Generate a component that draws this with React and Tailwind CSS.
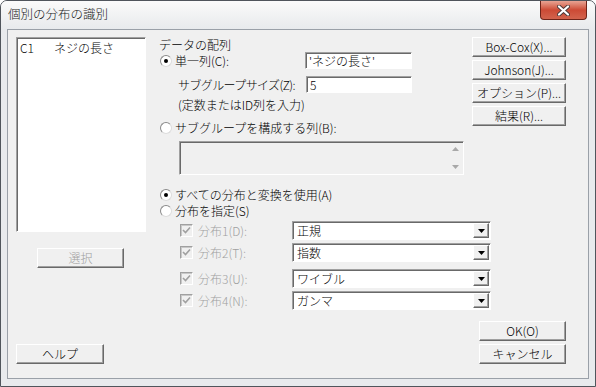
import React from 'react';

function Btn({ children, className = '', disabled }) {
  return (
    <div
      className={`h-[20px] flex items-center justify-center bg-[#f0f0f0] border border-t-white border-l-white border-r-[#696969] border-b-[#696969] shadow-[inset_-1px_-1px_0_#a0a0a0] text-[12px] leading-none ${disabled ? 'text-[#a0a0a0]' : 'text-black'} ${className}`}
    >
      {children}
    </div>
  );
}

function Radio({ checked }) {
  return (
    <span className="w-[12px] h-[12px] shrink-0 rounded-full bg-white border border-t-[#8a8a8a] border-l-[#8a8a8a] border-r-[#dcdcdc] border-b-[#dcdcdc] flex items-center justify-center">
      {checked && <span className="w-[4px] h-[4px] rounded-full bg-black" />}
    </span>
  );
}

function Check() {
  return (
    <span className="w-[13px] h-[13px] shrink-0 bg-[#f0f0f0] border border-t-[#a0a0a0] border-l-[#a0a0a0] border-r-white border-b-white shadow-[inset_1px_1px_0_#c8c8c8] flex items-center justify-center">
      <svg width="9" height="9" viewBox="0 0 9 9">
        <path d="M1 4 L3.5 6.5 L8 1.5" fill="none" stroke="#a0a0a0" strokeWidth="1.6" />
      </svg>
    </span>
  );
}

function Field({ children, className = '' }) {
  return (
    <div
      className={`h-[17px] bg-white border border-t-[#a0a0a0] border-l-[#a0a0a0] border-r-white border-b-white shadow-[inset_1px_1px_0_#696969] flex items-center pl-[3px] text-[12px] leading-none text-black ${className}`}
    >
      {children}
    </div>
  );
}

function Combo({ value }) {
  return (
    <div className="w-[199px] h-[19px] bg-white border border-t-[#a0a0a0] border-l-[#a0a0a0] border-r-white border-b-white shadow-[inset_1px_1px_0_#696969] flex items-center text-[12px] leading-none text-black">
      <span className="pl-[4px] flex-1">{value}</span>
      <div className="w-[16px] h-[15px] mr-[1px] bg-[#f0f0f0] border border-t-white border-l-white border-r-[#696969] border-b-[#696969] shadow-[inset_-1px_-1px_0_#a0a0a0] flex items-center justify-center">
        <svg width="7" height="4" viewBox="0 0 7 4">
          <path d="M0 0 H7 L3.5 4 Z" fill="#000" />
        </svg>
      </div>
    </div>
  );
}

const dists = [
  { label: '分布1(D):', value: '正規', mt: 'mt-[3px]' },
  { label: '分布2(T):', value: '指数', mt: 'mt-[3px]' },
  { label: '分布3(U):', value: 'ワイブル', mt: 'mt-[7px]' },
  { label: '分布4(N):', value: 'ガンマ', mt: 'mt-[3px]' },
];

export default function App() {
  return (
    <div className="w-[596px] h-[387px] flex flex-col bg-[#e8eaed] border border-[#50555c] rounded-t-[7px] overflow-hidden font-['Noto_Sans_CJK_JP',sans-serif] font-light text-[12px] text-black">
      {/* title bar */}
      <div className="h-[28px] flex items-start bg-gradient-to-b from-[#fbfbfb] via-[#f1f2f3] to-[#e8eaed]">
        <div className="pl-[7px] pt-[5px] text-[12.5px] leading-[16px] text-[#1a1a1a]">個別の分布の識別</div>
        <div className="ml-auto mr-[8px] w-[47px] h-[19px] rounded-b-[4px] border border-t-0 border-[#6e2419] bg-gradient-to-b from-[#e7a393] via-[#cc4a35] to-[#d2634d] flex items-center justify-center">
          <svg width="13" height="11" viewBox="0 0 13 11">
            <path d="M2 1.5 L11 9.5 M11 1.5 L2 9.5" stroke="#4a3a3a" strokeWidth="4" strokeLinecap="round" />
            <path d="M2 1.5 L11 9.5 M11 1.5 L2 9.5" stroke="#fff" strokeWidth="2.2" strokeLinecap="round" />
          </svg>
        </div>
      </div>

      {/* client area */}
      <div className="mx-[6px] h-[350px] bg-[#f0f0f0] border border-[#9aa0a8] flex pt-[7px] pl-[8px] pr-[22px] pb-[14px]">
        {/* left column */}
        <div className="w-[130px] flex flex-col">
          <div className="h-[195px] bg-white border border-t-[#a0a0a0] border-l-[#a0a0a0] border-r-white border-b-white shadow-[inset_1px_1px_0_#696969] pt-[3px] pl-[3px] flex leading-[14px]">
            <span className="w-[34px]">C1</span>
            <span>ネジの長さ</span>
          </div>
          <Btn disabled className="mt-[16px] ml-[21px] w-[87px]">選択</Btn>
          <Btn className="mt-auto w-[88px]">ヘルプ</Btn>
        </div>

        {/* right area */}
        <div className="ml-[13px] flex-1 flex flex-col">
          <div className="flex">
            <div className="w-[305px] flex flex-col">
              <div className="h-[15px] leading-[15px]">データの配列</div>
              <div className="h-[17px] flex items-center">
                <div className="w-[146px] flex items-center pl-[1px] gap-[3px]">
                  <Radio checked />
                  <span className="leading-none">単一列(C):</span>
                </div>
                <Field className="w-[107px]">'ネジの長さ'</Field>
              </div>
              <div className="mt-[7px] h-[17px] flex items-center">
                <div className="w-[147px] pl-[19px] leading-none tracking-[-0.6px]">サブグループサイズ(Z):</div>
                <Field className="w-[106px]">5</Field>
              </div>
              <div className="mt-[5px] pl-[19px] leading-[14px]">(定数またはID列を入力)</div>
              <div className="mt-[9px] h-[14px] flex items-center pl-[1px] gap-[3px]">
                <Radio />
                <span className="leading-none">サブグループを構成する列(B):</span>
              </div>
              <div className="mt-[6px] ml-[20px] h-[34px] bg-[#f0f0f0] border border-t-[#a0a0a0] border-l-[#a0a0a0] border-r-white border-b-white shadow-[inset_1px_1px_0_#696969] flex justify-end">
                <div className="w-[16px] flex flex-col items-center justify-between py-[5px]">
                  <svg width="7" height="4" viewBox="0 0 7 4">
                    <path d="M0 4 H7 L3.5 0 Z" fill="#a8a8a8" />
                  </svg>
                  <svg width="7" height="4" viewBox="0 0 7 4">
                    <path d="M0 0 H7 L3.5 4 Z" fill="#a8a8a8" />
                  </svg>
                </div>
              </div>
            </div>

            <div className="ml-auto w-[94px] flex flex-col gap-[3px]">
              <Btn>Box-Cox(X)...</Btn>
              <Btn>Johnson(J)...</Btn>
              <Btn>オプション(P)...</Btn>
              <Btn>結果(R)...</Btn>
            </div>
          </div>

          <div className="mt-[13px] h-[14px] flex items-center pl-[1px] gap-[3px]">
            <Radio checked />
            <span className="leading-none">すべての分布と変換を使用(A)</span>
          </div>
          <div className="mt-[2px] h-[14px] flex items-center pl-[1px] gap-[3px]">
            <Radio />
            <span className="leading-none">分布を指定(S)</span>
          </div>

          {dists.map((d) => (
            <div key={d.label} className={`${d.mt} h-[19px] flex items-center`}>
              <div className="w-[133px] pl-[21px] flex items-center gap-[5px] text-[#a0a0a0]">
                <Check />
                <span className="leading-none">{d.label}</span>
              </div>
              <Combo value={d.value} />
            </div>
          ))}

          <Btn className="mt-[11px] self-end w-[87px]">OK(O)</Btn>
          <Btn className="mt-[3px] self-end w-[87px]">キャンセル</Btn>
        </div>
      </div>
    </div>
  );
}
